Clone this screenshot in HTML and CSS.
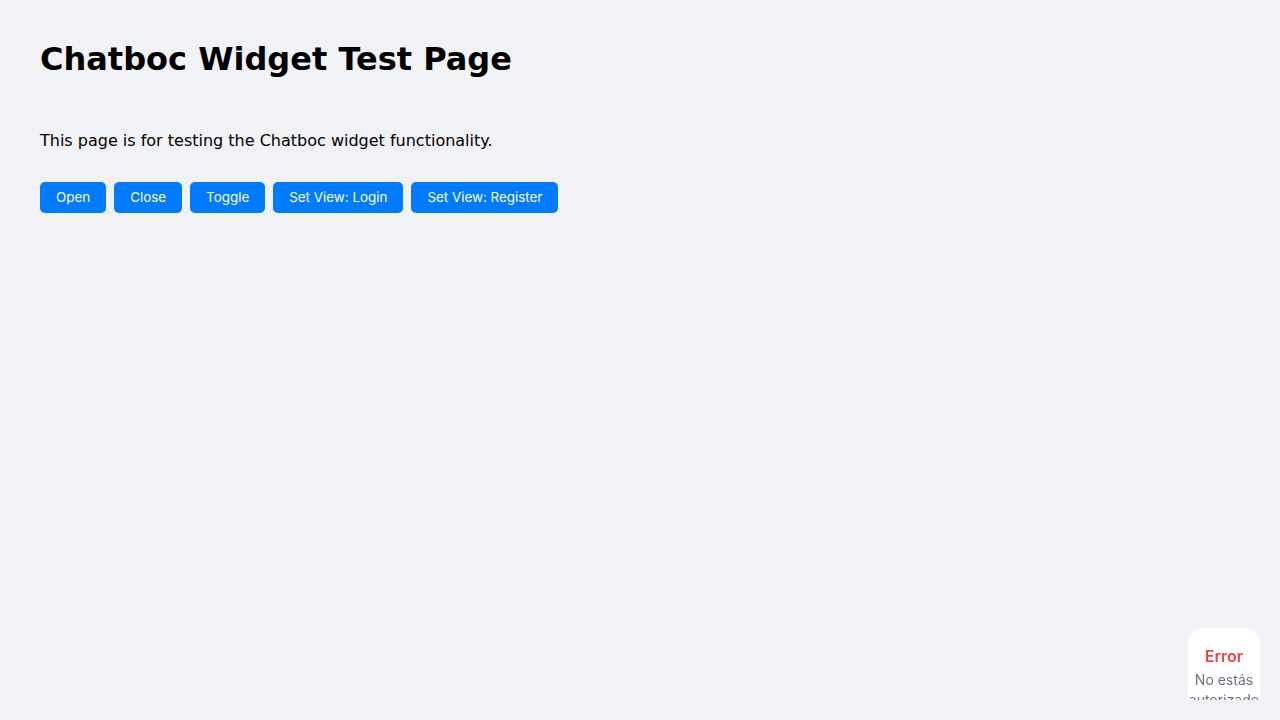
FILE: index.html
```html
<!DOCTYPE html>
<html lang="en">
<head>
<meta charset="utf-8">
<title>Chatboc Widget Test Page</title>
<link rel="stylesheet" href="styles.css">
</head>
<body>
<h1 class="title">Chatboc Widget Test Page</h1>
<p class="intro">This page is for testing the Chatboc widget functionality.</p>
<div class="actions">
  <button class="btn">Open</button>
  <button class="btn">Close</button>
  <button class="btn">Toggle</button>
  <button class="btn">Set View: Login</button>
  <button class="btn">Set View: Register</button>
</div>
<div class="widget">
  <div class="widget-inner">
    <div class="widget-title">Error</div>
    <div class="widget-msg">No estás autorizado</div>
  </div>
</div>
</body>
</html>
```
FILE: styles.css
```css
html, body {
  margin: 0;
  background: #f0f2f5;
}
body {
  padding: 20px 40px;
  font-family: "DejaVu Sans", sans-serif;
  color: #000;
}
.title {
  font-size: 32px;
  font-weight: bold;
  margin: 21px 0 0;
  line-height: 37px;
}
.intro {
  margin: 53px 0 0;
  font-size: 16px;
  line-height: 19px;
}
.actions {
  display: flex;
  gap: 8px;
  margin-top: 32px;
}
.btn {
  font-family: Inter, sans-serif;
  font-size: 13.4px;
  background: #007bff;
  color: #fff;
  border: none;
  border-radius: 5px;
  padding: 0 16px;
  height: 31px;
  line-height: 31px;
}
.widget {
  position: fixed;
  right: 20px;
  bottom: 20px;
  width: 72px;
  height: 72px;
  background: #fff;
  border-radius: 16px 16px 0 0;
  overflow: hidden;
}
.widget-inner {
  padding-top: 16px;
  text-align: center;
  font-family: Inter, "Noto Sans", sans-serif;
}
.widget-title {
  color: #ef4444;
  font-weight: 600;
  font-size: 16px;
  line-height: 24px;
}
.widget-msg {
  margin-top: 2px;
  color: #6b7280;
  font-size: 14px;
  line-height: 20px;
}
```
